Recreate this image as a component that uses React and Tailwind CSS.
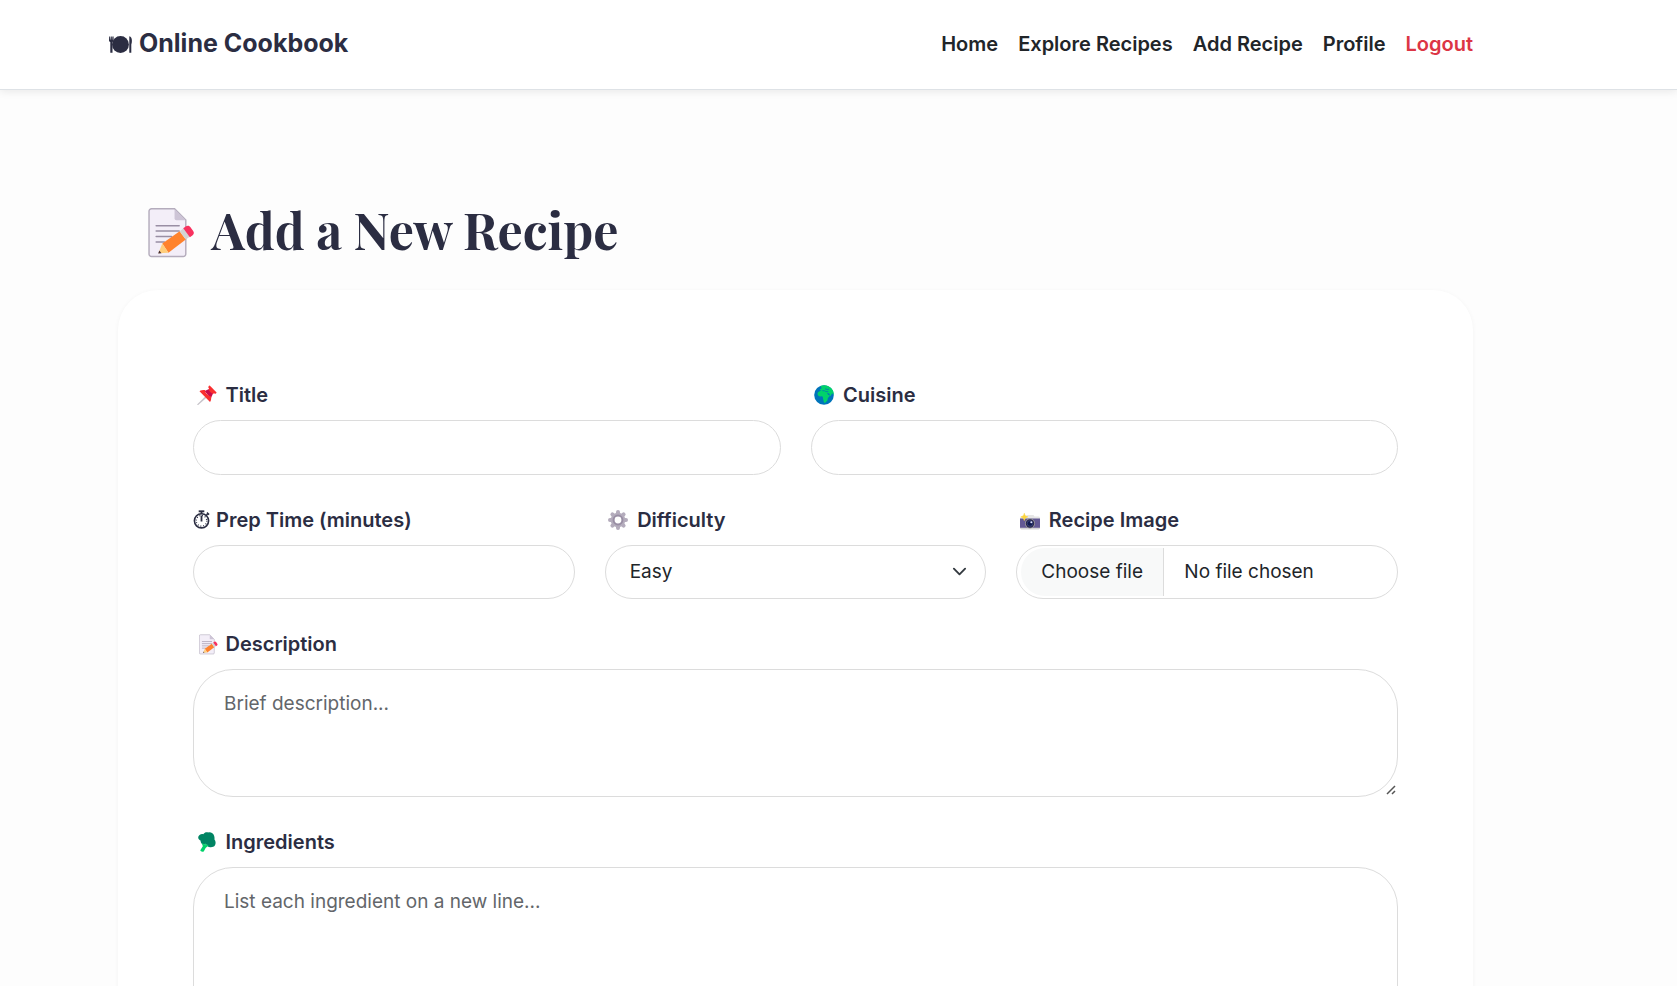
const NoteIcon = ({ className }) => (
  <svg viewBox="0 0 46 52" preserveAspectRatio="none" className={className} fill="none">
    <path d="M3.5 1.8H26l11 11.2v34a2.5 2.5 0 0 1-2.500 2.500H3.500A2.500 2.500 0 0 1 1 47V4.300A2.500 2.500 0 0 1 3.500 1.800Z" fill="#f3eef8" stroke="#b4acbc" strokeWidth="1.400" />
    <path d="M26 2v9.500a1.800 1.800 0 0 0 1.800 1.800H37Z" fill="#cdc4d6" />
    <path d="M8 18.700h22.500M8 23.900h22.500M8 29.400h15M8 35h8" stroke="#998ea4" strokeWidth="1.500" strokeLinecap="round" />
    <path d="M14 36.500 31 24.200l6 8.300L20 45.700Z" fill="#ff822d" />
    <path d="m14 36.500 6 9.200-9.800.6Z" fill="#ffce7c" />
    <path d="m11 43.500-1 3 3.200-.2Z" fill="#402a32" />
    <path d="m31 24.200 4-3 6.200 8.300-4.200 3Z" fill="#d3d3d3" />
    <path d="m34.500 21.300 2.700-2c1.400-1 3-.8 4.200.8l2.800 3.900c1.200 1.600.8 3.200-.5 4.200l-2.700 2Z" fill="#f8315f" />
  </svg>
);

const PlateIcon = () => (
  <svg viewBox="0 0 23 17" className="h-[17px] w-[23px]" fill="#2b2d42">
    <circle cx="11.500" cy="8.500" r="8.400" />
    <path d="M.2.500h1.100l.3 3.200h.3L2 .5h.8l.1 3.200h.3L3.400.5h1.200v3.700c0 1-.5 1.500-1.100 1.900v10.600H1.300V6.100C.6 5.700 0 5.200 0 4.200ZM20.300.300c1.800.4 2.600 2 2.600 4.400 0 1.700-.3 3-.6 3.800v8.200h-2Z" />
  </svg>
);

const PinIcon = () => (
  <svg viewBox="0 0 20 20" className="h-5 w-5">
    <path d="m8.500 11.300 1.200 1.200L1.200 20H.3v-.8Z" fill="#c6c3c9" />
    <path d="m7.500 6 4.700-2 4 4.300-2.500 5.200Z" fill="#ca0b4a" />
    <path d="M12.700.4c-1 .4-1.500 1.200-1.300 2.200l5.900 6c1 .3 1.900-.1 2.300-1.200Z" fill="#f92f30" />
    <path d="m11.900 3.300 1.500-1.400 4.800 5-1.500 1.600c-1.100.6-2 0-2.900-.9s-2.500-2.600-1.900-4.300ZM2.500 6.200c1.200-1.200 3.200-1.300 5.400-1.300.2 1.900 1 3.200 2.200 4.400s2.600 2 4.100 2.100c.1 2.500-.1 4.400-1.200 5.700Z" fill="#f92f30" />
  </svg>
);

const GlobeIcon = () => (
  <svg viewBox="0 0 20 20" className="h-5 w-5">
    <circle cx="10" cy="10" r="9.800" fill="#0074ba" />
    <path d="M6.200 1.100C10.500-.9 15 .3 17.600 3.600c1.500 1.800 2.200 3.800 2.200 6-.5.300-.9-.5-1.300-1.300-.8.500-1.400 1.600-2 2.700-.7-.4-.8-1.600-1.200-2.600-.7-.3-1.600-.3-2.400-.7l1.400 2.200 1.500.3c-.3 1.300-1.400 2-2 3.100l-.3 2-1.300 1.400c-.4 1.200-1.500 1.500-2.200.8-.5-1.200-.4-2.500-1-3.700.2-1-.2-1.800-.8-2.500-1.700.3-3.200.2-4.100-.8-.8-1-.7-2.300 0-3.200L6 6.100l1.400-.5-1.500-.7.600-1.100 1.400-.5Z" fill="#00d26a" />
    <path d="m8.300 5.700 2.300.1 1.200.8 2.500.1M11 3.800l2.700.8 1.200-.6" stroke="#0074ba" strokeWidth=".800" fill="none" />
  </svg>
);

const StopwatchIcon = () => (
  <svg viewBox="0 0 17 19" className="h-[19px] w-[17px]" fill="none" stroke="#2b2d42">
    <circle cx="8.500" cy="10.800" r="7.100" strokeWidth="1.600" />
    <circle cx="8.500" cy="10.800" r="5.300" strokeWidth="1.300" strokeDasharray="0.9 1.870" />
    <path d="M8.500 5.500v6M8.500 1v3" strokeWidth="1.800" />
    <path d="M5.700 1.300h5.600" strokeWidth="1.900" />
    <path d="m13.400 5.300 1.600-1.700M13.900 2.600l2.200 2" strokeWidth="1.500" />
  </svg>
);

const GearIcon = () => (
  <svg viewBox="0 0 20 20" className="h-5 w-5" fill="none">
    <g stroke="#b4acbc" strokeWidth="4" strokeLinecap="round">
      <path d="M10 2v16M2 10h16M4.400 4.400l11.200 11.200M15.600 4.400 4.400 15.600" />
    </g>
    <circle cx="10" cy="10" r="7.300" fill="#b4acbc" />
    <circle cx="10" cy="10" r="4.400" fill="#fff" stroke="#998ea4" strokeWidth="2" />
  </svg>
);

const CameraIcon = () => (
  <svg viewBox="0 0 20 17" className="h-[17px] w-5">
    <path d="M5 4.500 6.500 2h7l1 1.500h4c.9 0 1.500.6 1.500 1.500v1H0V4.500Z" fill="#e6e6e6" />
    <path d="M0 5.500h20V15H0Z" fill="#635994" />
    <path d="M0 14.700h20v.4c0 .8-.6 1.400-1.400 1.400H1.400C.6 16.500 0 15.900 0 15.100Z" fill="#d3d3d3" />
    <circle cx="10" cy="10.500" r="5" fill="#9b9b9b" />
    <circle cx="10" cy="10.500" r="4.200" fill="#26254a" />
    <circle cx="10" cy="10.500" r="2.800" fill="#10194e" stroke="#46568f" strokeWidth=".6" />
    <circle cx="11.300" cy="9.300" r="1" fill="#e1e5ff" />
    <path d="M4.300.3c.6 2.300 1.100 2.900 3.500 3.600-2.400.7-2.900 1.300-3.500 3.600-.6-2.300-1.100-2.900-3.500-3.600 2.400-.7 2.900-1.300 3.500-3.600Z" fill="#fcd53f" stroke="#fcd53f" strokeWidth=".6" />
  </svg>
);

const BroccoliIcon = () => (
  <svg viewBox="0 0 18 20" className="h-5 w-[18px]">
    <path d="M5.200 2.200C6.400.3 8.500-.2 10.200.4c2.700-.6 5.200.9 5.900 3.400.4 1.300.6 2.400.3 3.500 1.500 1.800 1.500 4.200.6 5.900-1.200 2-4 2.300-5.900 1.700-1.300-.2-2.400-1.400-3-2.700-1.700.7-3.500.4-4.600-.8-.8-1-1-1.900-.8-2.700C.7 7.900-.2 6.200.4 4.600c.9-2 2.700-2.900 4.800-2.400Z" fill="#008463" />
    <path d="m4 11.500 1-.2 1.100 1.500.8-1.400 1 .2-.2 1.600 1.800-.8 1 1.100-2.900 2.400-1.700 3.300c-.9 1.300-3.700.5-3.600-.9l2.500-4Z" fill="#00d26a" />
  </svg>
);

const Label = ({ icon, iconClass, textClass, children }) => (
  <div className="flex h-[30px] items-center text-[20px] font-semibold text-[#2b2d42]">
    <span className={iconClass}>{icon}</span>
    <span className={textClass}>{children}</span>
  </div>
);

const Grip = () => (
  <svg viewBox="0 0 10 10" className="absolute right-px bottom-px h-[10px] w-[10px]" stroke="#555" strokeWidth="1.500">
    <path d="M1 9 9 1M6 9 9 6" />
  </svg>
);

export default function App() {
  return (
    <div className="h-[986px] overflow-hidden bg-[#fdfdfd] font-['Inter','Liberation_Sans',sans-serif] text-[#212529]">
      <header className="relative flex h-[90px] items-center justify-between border-b border-[#dee2e6] bg-white pr-[204px] pl-[109px] shadow-[0_2px_8px_rgba(0,0,0,0.08)]">
        <div className="flex items-center gap-[7px] text-[25px] font-bold text-[#2b2d42]">
          <PlateIcon />
          <span className="-mt-px">Online Cookbook</span>
        </div>
        <nav className="-mt-px flex gap-5 text-[20px] font-semibold">
          <a>Home</a>
          <a>Explore Recipes</a>
          <a>Add Recipe</a>
          <a>Profile</a>
          <a className="text-[#dc3545]">Logout</a>
        </nav>
      </header>

      <main className="pt-[110px] pr-[204px] pl-[118px]">
        <h1 className="flex h-[60px] items-start pl-[29px] font-['Playfair_Display','Liberation_Serif',serif] text-[50px] leading-[60px] font-bold text-[#2b2d42]">
          <NoteIcon className="mt-[7px] ml-[0.500px] h-[52px] w-[47px]" />
          <span className="ml-[17px] whitespace-nowrap">Add a New Recipe</span>
        </h1>

        <form className="mt-[30px] flex h-[900px] flex-col rounded-[40px] bg-white px-[75px] pt-[90px] shadow-[0_1px_5px_rgba(0,0,0,0.045)]">
          <div className="grid grid-cols-2 gap-[30px]">
            <div>
              <Label icon={<PinIcon />} iconClass="ml-1" textClass="ml-[8.500px]">Title</Label>
              <div className="mt-[10px] h-[55px] rounded-full border border-[#dcdcdc]" />
            </div>
            <div>
              <Label icon={<GlobeIcon />} iconClass="ml-[3.500px]" textClass="ml-[9px]">Cuisine</Label>
              <div className="mt-[10px] h-[55px] rounded-full border border-[#dcdcdc]" />
            </div>
          </div>

          <div className="mt-[30px] grid grid-cols-3 gap-[30px]">
            <div>
              <Label icon={<StopwatchIcon />} iconClass="-mt-px" textClass="ml-[6px]">Prep Time (minutes)</Label>
              <div className="mt-[10px] h-[54px] rounded-full border border-[#dcdcdc]" />
            </div>
            <div>
              <Label icon={<GearIcon />} iconClass="ml-[3.500px]" textClass="ml-[9px]">Difficulty</Label>
              <div className="mt-[10px] flex h-[54px] items-center justify-between rounded-full border border-[#dcdcdc] pr-[18px] pl-6 text-[19px]">
                <span>Easy</span>
                <svg viewBox="0 0 16 16" className="-mt-px h-[15px] w-[15px]" fill="none" stroke="#343a40" strokeWidth="2" strokeLinecap="round" strokeLinejoin="round">
                  <path d="m2 5 6 6 6-6" />
                </svg>
              </div>
            </div>
            <div>
              <Label icon={<CameraIcon />} iconClass="ml-[3.500px] mt-[3px]" textClass="ml-[9px]">Recipe Image</Label>
              <div className="mt-[10px] flex h-[54px] rounded-full border border-[#dcdcdc] py-[2px] pl-[4px] text-[19px]">
                <span className="flex w-[143px] items-center rounded-l-full border-r border-[#dcdcdc] bg-[#f8f9f9] pl-[20px] whitespace-nowrap">Choose file</span>
                <span className="flex items-center pl-5">No file chosen</span>
              </div>
            </div>
          </div>

          <div className="mt-[30px]">
            <Label icon={<NoteIcon className="h-[21px] w-[19px]" />} iconClass="ml-[6px]" textClass="ml-[7.500px]">Description</Label>
            <div className="relative mt-[10px] h-[128px] rounded-[40px] border border-[#dcdcdc] px-[30px] pt-[20px] text-[19px] leading-[28px] text-[#63666a]">
              Brief description...
              <Grip />
            </div>
          </div>

          <div className="mt-[30px]">
            <Label icon={<BroccoliIcon />} iconClass="ml-[5px]" textClass="ml-[9.500px]">Ingredients</Label>
            <div className="relative mt-[10px] h-[180px] rounded-[40px] border border-[#dcdcdc] px-[30px] pt-[20px] text-[19px] leading-[28px] text-[#63666a]">
              List each ingredient on a new line...
              <Grip />
            </div>
          </div>
        </form>
      </main>
    </div>
  );
}
